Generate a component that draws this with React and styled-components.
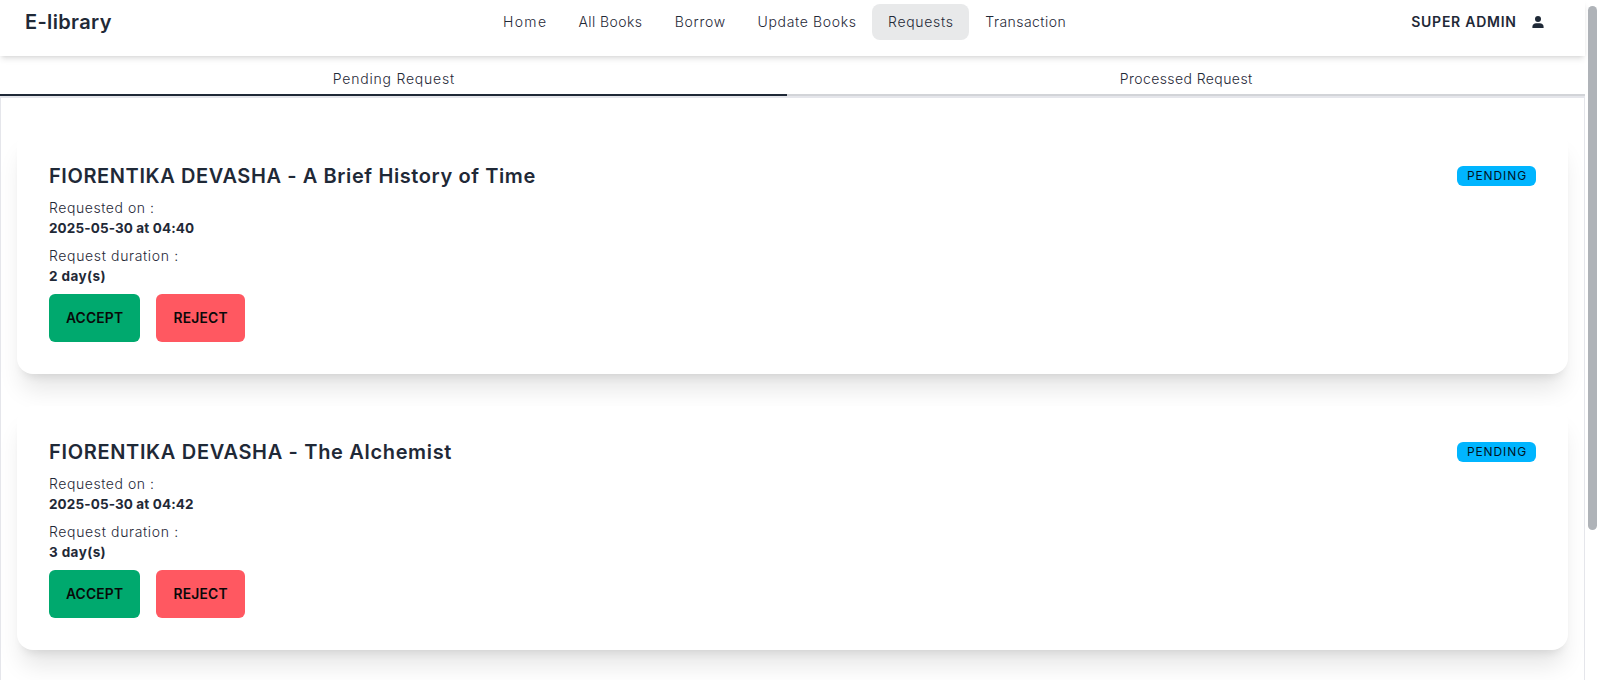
import React from "react";
import styled, { createGlobalStyle } from "styled-components";

const GlobalStyle = createGlobalStyle`
  *, *::before, *::after { box-sizing: border-box; }
  html, body { margin: 0; height: 100%; overflow: hidden; background: #fff; }
  body { font-family: Inter, "Liberation Sans", sans-serif; font-size: 14px; line-height: 20px; color: #1f2937; }
  h1, h2, p { margin: 0; font-weight: inherit; }
`;

const Viewport = styled.div`
  display: flex;
  height: 680px;
  overflow: hidden;
`;

const Page = styled.div`
  flex: 1;
  display: flex;
  flex-direction: column;
  min-width: 0;
`;

const ScrollRail = styled.div`
  width: 14px;
  padding: 6px 2px 0 3px;
`;

const ScrollThumb = styled.div`
  height: 524px;
  border-radius: 5px;
  background: #afb3b8;
`;

/* Letter spacing without the trailing gap, so centred text stays centred. */
const Tracked = styled.span`
  display: inline-block;
  white-space: nowrap;
  letter-spacing: ${(p) => p.$track}px;
  margin-right: ${(p) => -p.$track}px;
`;

const Navbar = styled.header`
  position: relative;
  z-index: 1;
  flex: none;
  display: grid;
  grid-template-columns: 462px auto 1fr;
  align-items: center;
  height: 56px;
  padding: 0 41px 12px 25px;
  background: #fff;
  box-shadow: 0 4px 6px -1px rgba(0, 0, 0, 0.1), 0 2px 4px -2px rgba(0, 0, 0, 0.1);
`;

const Brand = styled.h1`
  font-size: 20px;
  font-weight: 590;
  line-height: 28px;
`;

const NavLinks = styled.nav`
  display: flex;
`;

const NavLink = styled.a`
  width: ${(p) => p.$width}px;
  padding: 8px 0;
  border-radius: 8px;
  text-align: center;
  font-weight: 350;
  background: ${(p) => (p.$active ? "#e8e9ea" : "transparent")};
`;

const Account = styled.div`
  display: flex;
  justify-content: flex-end;
  align-items: center;
  gap: 16px;
  font-size: 14px;
  font-weight: 590;
`;

const UserGlyph = styled.svg`
  display: block;
  width: 12px;
  height: 12px;
  fill: #1f2937;
`;

const Tabs = styled.div`
  flex: none;
  display: flex;
  height: 40px;
`;

const Tab = styled.div`
  flex: ${(p) => (p.$active ? "0 0 787px" : "1")};
  padding-top: 13px;
  text-align: center;
  font-weight: 350;
  border-bottom: 2px solid ${(p) => (p.$active ? "#1f2937" : "#d2d4d8")};
`;

const Panel = styled.main`
  flex: 1;
  display: flex;
  flex-direction: column;
  gap: 32px;
  padding: 32px 16px 0;
  border: 1px solid #e5e6eb;
  border-top-width: 2px;
  border-bottom: 0;
  background: #fff;
`;

const Card = styled.article`
  flex: none;
  display: flex;
  flex-direction: column;
  gap: 8px;
  padding: 32px;
  border-radius: 16px;
  background: #fff;
  box-shadow: 0 20px 25px -5px rgba(0, 0, 0, 0.1), 0 8px 10px -6px rgba(0, 0, 0, 0.1);
`;

const CardHead = styled.div`
  display: flex;
  justify-content: space-between;
  align-items: center;
`;

const Title = styled.h2`
  font-size: 20px;
  font-weight: 590;
  line-height: 28px;
`;

const Badge = styled.span`
  display: flex;
  justify-content: center;
  align-items: center;
  width: 79px;
  height: 20px;
  border-radius: 6px;
  background: #00b5ff;
  color: #00141f;
  font-size: 12px;
`;

const FieldLabel = styled.p`
  font-weight: 350;
`;

const FieldValue = styled.p`
  font-size: 13.5px;
  font-weight: 700;
`;

const Actions = styled.div`
  display: flex;
  gap: 16px;
`;

const ActionButton = styled.button`
  width: ${(p) => p.$width}px;
  height: 48px;
  padding: 0;
  border: 0;
  border-radius: 6px;
  background: ${(p) => p.$color};
  color: #090909;
  font-family: inherit;
  font-size: 13.8px;
  font-weight: 600;
`;

const links = [
  { text: "Home", width: 75, track: 1.35 },
  { text: "All Books", width: 96.5, track: 0.4 },
  { text: "Borrow", width: 83, track: 0.7 },
  { text: "Update Books", width: 130.5, track: 0.65 },
  { text: "Requests", width: 97, track: 0.7 , active: true },
  { text: "Transaction", width: 113, track: 0.45 },
];

const requests = [
  { title: "FIORENTIKA DEVASHA - A Brief History of Time", track: 0.6, date: "2025-05-30 at 04:40", days: "2 day(s)" },
  { title: "FIORENTIKA DEVASHA - The Alchemist", track: 0.67, date: "2025-05-30 at 04:42", days: "3 day(s)" },
];

function RequestCard({ title, track, date, days }) {
  return (
    <Card>
      <CardHead>
        <Title><Tracked $track={track}>{title}</Tracked></Title>
        <Badge><Tracked $track={0.9}>PENDING</Tracked></Badge>
      </CardHead>
      <div>
        <FieldLabel><Tracked $track={0.56}>Requested on :</Tracked></FieldLabel>
        <FieldValue><Tracked $track={0.12}>{date}</Tracked></FieldValue>
      </div>
      <div>
        <FieldLabel><Tracked $track={0.64}>Request duration :</Tracked></FieldLabel>
        <FieldValue><Tracked $track={0.4}>{days}</Tracked></FieldValue>
      </div>
      <Actions>
        <ActionButton $width={91} $color="#00a96e"><Tracked $track={0.2}>ACCEPT</Tracked></ActionButton>
        <ActionButton $width={89} $color="#ff5861"><Tracked $track={0.25}>REJECT</Tracked></ActionButton>
      </Actions>
    </Card>
  );
}

export default function App() {
  return (
    <Viewport>
      <GlobalStyle />
      <Page>
        <Navbar>
          <Brand><Tracked $track={0.35}>E-library</Tracked></Brand>
          <NavLinks>
            {links.map((l) => (
              <NavLink key={l.text} $width={l.width} $active={l.active}>
                <Tracked $track={l.track}>{l.text}</Tracked>
              </NavLink>
            ))}
          </NavLinks>
          <Account>
            <Tracked $track={0.75}>SUPER ADMIN</Tracked>
            <UserGlyph viewBox="0 0 12 12">
              <circle cx="6" cy="3" r="3" />
              <path d="M.4 12v-1.2C.4 8.600 2 7.200 4.200 7.200h3.600c2.200 0 3.800 1.400 3.800 3.600V12z" />
            </UserGlyph>
          </Account>
        </Navbar>
        <Tabs>
          <Tab $active><Tracked $track={0.79}>Pending Request</Tracked></Tab>
          <Tab><Tracked $track={0.42}>Processed Request</Tracked></Tab>
        </Tabs>
        <Panel>
          {requests.map((r) => <RequestCard key={r.title} {...r} />)}
        </Panel>
      </Page>
      <ScrollRail><ScrollThumb /></ScrollRail>
    </Viewport>
  );
}
